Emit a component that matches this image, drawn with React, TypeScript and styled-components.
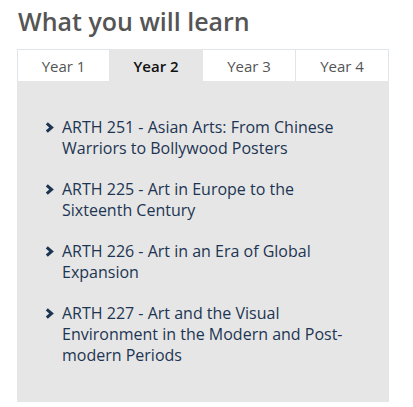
import React, { useState } from 'react';
import styled, { createGlobalStyle } from 'styled-components';

const GlobalStyle = createGlobalStyle`
  body {
    margin: 0;
    background: #fff;
    font-family: 'Open Sans', 'Liberation Sans', sans-serif;
  }
`;

const Wrapper = styled.section`
  width: 372px;
  padding: 6px 0 8px 17px;
`;

const Heading = styled.h2`
  margin: 0 0 13px 1px;
  font-size: 25px;
  line-height: 30px;
  font-weight: 600;
  color: #555;
`;

const TabBar = styled.div`
  display: grid;
  grid-template-columns: repeat(4, 1fr);
  height: 32px;
`;

const Tab = styled.button<{ $active: boolean }>`
  border: 1px solid #dfe5ea;
  border-left-width: 0;
  border-bottom: none;
  &:first-child {
    border-left-width: 1px;
  }
  background: ${p => (p.$active ? '#e6e6e6' : '#fff')};
  border-color: ${p => (p.$active ? '#e6e6e6' : '#dfe5ea')};
  color: ${p => (p.$active ? '#111' : '#555')};
  font-family: inherit;
  font-size: 15px;
  font-weight: ${p => (p.$active ? 600 : 400)};
  padding: 0;
  cursor: pointer;
`;

const Panel = styled.div`
  background: #e6e6e6;
  padding: 36px 44px 36px 28px;
`;

const CourseList = styled.ul`
  list-style: none;
  margin: 0;
  padding: 0;
  display: flex;
  flex-direction: column;
  gap: 20px;
`;

const Course = styled.li`
  display: flex;
  align-items: flex-start;
  gap: 8px;
  color: #1d3553;
  font-size: 16px;
  line-height: 21px;
`;

const Chevron = styled.svg`
  flex: none;
  width: 9px;
  height: 11px;
  margin-top: 5px;
`;

const years = ['Year 1', 'Year 2', 'Year 3', 'Year 4'];

const courses = [
  'ARTH 251 - Asian Arts: From Chinese Warriors to Bollywood Posters',
  'ARTH 225 - Art in Europe to the Sixteenth Century',
  'ARTH 226 - Art in an Era of Global Expansion',
  'ARTH 227 - Art and the Visual Environment in the Modern and Post-modern Periods',
];

const App: React.FC = () => {
  const [active, setActive] = useState(1);

  return (
    <Wrapper>
      <GlobalStyle />
      <Heading>What you will learn</Heading>
      <TabBar>
        {years.map((y, i) => (
          <Tab key={y} $active={i === active} onClick={() => setActive(i)}>
            {y}
          </Tab>
        ))}
      </TabBar>
      <Panel>
        <CourseList>
          {courses.map(c => (
            <Course key={c}>
              <Chevron viewBox="0 0 9 11">
                <path d="M1.8 1.3 L6.6 5.5 L1.8 9.7" fill="none" stroke="#1d3553" strokeWidth="3" strokeLinejoin="miter" />
              </Chevron>
              <span>{c}</span>
            </Course>
          ))}
        </CourseList>
      </Panel>
    </Wrapper>
  );
};

export default App;
